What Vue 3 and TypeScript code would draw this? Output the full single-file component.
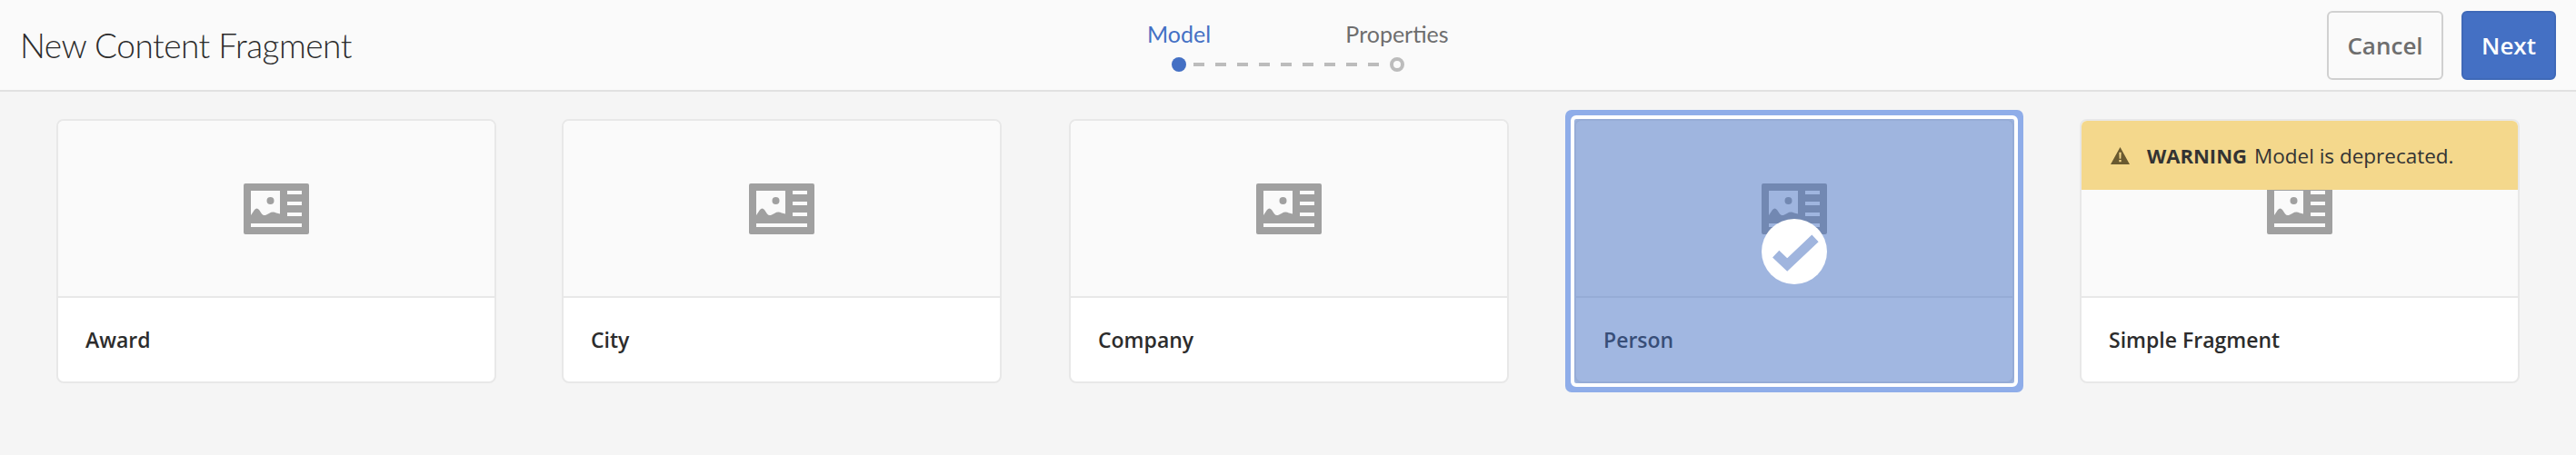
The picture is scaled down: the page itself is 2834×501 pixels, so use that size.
<script setup lang="ts">
interface Model {
  name: string;
  selected?: boolean;
  deprecated?: boolean;
}

const models: Model[] = [
  { name: 'Award' },
  { name: 'City' },
  { name: 'Company' },
  { name: 'Person', selected: true },
  { name: 'Simple Fragment', deprecated: true }
];
</script>

<template>
  <div class="page">
    <header class="bar">
      <h1 class="title">New Content Fragment</h1>
      <div class="steps">
        <div class="labels">
          <span class="step-label active">Model</span>
          <span class="step-label">Properties</span>
        </div>
        <div class="track">
          <span class="dot"></span>
          <span class="dashes"></span>
          <span class="ring"></span>
        </div>
      </div>
      <div class="actions">
        <button class="btn cancel">Cancel</button>
        <button class="btn next">Next</button>
      </div>
    </header>

    <main class="cards">
      <div v-for="m in models" :key="m.name" class="card">
        <div class="thumb">
          <div v-if="m.deprecated" class="warning">
            <svg class="warn-icon" viewBox="0 0 20 18">
              <path fill-rule="evenodd" d="M10 0 L20 18 L0 18 Z M8.9 5.5 L9.2 12 L10.8 12 L11.1 5.5 Z M8.9 13.3 V15.5 H11.1 V13.3 Z" />
            </svg>
            <strong>WARNING</strong>
            <span>Model is deprecated.</span>
          </div>
          <svg class="doc-icon" viewBox="0 0 72 56">
            <path
              fill-rule="evenodd"
              d="M2 0 H70 A2 2 0 0 1 72 2 V54 A2 2 0 0 1 70 56 H2 A2 2 0 0 1 0 54 V2 A2 2 0 0 1 2 0 Z
                 M8 8 V35 L12 29 Q14.500 26 17 29 L20 33.500 Q22 36 25 34.500 L28 33 Q32 30.500 36 32.500 L40 33.500 V8 Z
                 M48 8 V12 H64 V8 Z M48 20 V24 H64 V20 Z M48 32 V36 H64 V32 Z M8 44 V48 H64 V44 Z"
            />
            <circle cx="29.500" cy="19" r="4" />
          </svg>
        </div>
        <div class="name">{{ m.name }}</div>
        <template v-if="m.selected">
          <div class="overlay"></div>
          <div class="check">
            <svg viewBox="-36 -36 72 72"><path d="M-20.300 2.700 L-7.800 14.500 L23 -14.700" /></svg>
          </div>
        </template>
      </div>
    </main>
  </div>
</template>

<style scoped>
.page {
  width: 2834px;
  height: 501px;
  background: #f5f5f5;
  font-family: "Open Sans", "Liberation Sans", sans-serif;
  color: #2c2c2c;
  overflow: hidden;
}

.bar {
  height: 99px;
  background: #fafafa;
  border-bottom: 2px solid #e1e1e1;
  display: grid;
  grid-template-columns: 1fr auto 1fr;
  align-items: center;
  padding: 0 22px;
}

.title {
  margin: 0;
  font-family: Lato, sans-serif;
  font-size: 37px;
  font-weight: 300;
  letter-spacing: -0.5px;
  color: #2c2c2c;
}

.steps {
  display: flex;
  flex-direction: column;
  align-items: center;
  gap: 11px;
  padding-top: 1px;
}

.labels {
  display: grid;
  grid-template-columns: 240px 240px;
  justify-items: center;
  font-family: Lato, sans-serif;
}

.step-label {
  font-size: 25px;
  color: #6e6e6e;
}

.step-label.active {
  color: #4470c4;
}

.track {
  display: flex;
  align-items: center;
  gap: 8px;
}

.dot {
  width: 16px;
  height: 16px;
  border-radius: 50%;
  background: #4470c4;
}

.dashes {
  width: 208px;
  height: 4px;
  background: repeating-linear-gradient(90deg, #bcbcbc 0 12px, transparent 12px 24px);
}

.ring {
  width: 16px;
  height: 16px;
  box-sizing: border-box;
  border: 4px solid #bcbcbc;
  border-radius: 50%;
}

.actions {
  display: flex;
  justify-content: flex-end;
  gap: 20px;
}

.btn {
  height: 76px;
  box-sizing: border-box;
  border-radius: 6px;
  font-family: "Open Sans", sans-serif;
  font-size: 26px;
  font-weight: 600;
}

.cancel {
  width: 128px;
  background: #fafafa;
  border: 2px solid #d0d0d0;
  color: #6e6e6e;
}

.next {
  width: 104px;
  background: #4470c4;
  border: 2px solid #3f69b8;
  color: #fff;
}

.cards {
  display: grid;
  grid-template-columns: 556px 558px 556px 556px 484px;
  padding: 30px 62px 0;
}

.card {
  position: relative;
  width: 484px;
  height: 291px;
  box-sizing: border-box;
  background: #fff;
  border: 2px solid #e8e8e8;
  border-radius: 8px;
  display: flex;
  flex-direction: column;
}

.thumb {
  position: relative;
  height: 193px;
  flex: none;
  background: #fafafa;
  border-bottom: 2px solid #e8e8e8;
  border-radius: 6px 6px 0 0;
  display: flex;
  align-items: center;
  justify-content: center;
  overflow: hidden;
}

.doc-icon {
  width: 72px;
  height: 56px;
  fill: #a0a0a0;
}

.warning {
  position: absolute;
  inset: 0 0 auto 0;
  height: 76px;
  background: #f4d88c;
  display: flex;
  align-items: center;
  padding-left: 32px;
  font-size: 22px;
  color: #333;
  gap: 8px;
}

.warning span {
  font-size: 22.5px;
}

.warn-icon {
  width: 21px;
  height: 19px;
  fill: #6a5a30;
  margin-right: 11px;
}

.name {
  flex: 1;
  display: flex;
  align-items: center;
  padding-left: 30px;
  font-size: 23px;
  font-weight: 600;
  color: #2c2c2c;
}

.overlay {
  position: absolute;
  inset: -2px;
  background: rgba(68, 112, 196, 0.5);
  outline: 4px solid #fff;
  box-shadow: 0 0 0 10px #8fade9;
  border-radius: 2px;
}

.check {
  position: absolute;
  left: 50%;
  top: 108px;
  width: 72px;
  height: 72px;
  margin-left: -36px;
  background: #fff;
  border-radius: 50%;
}

.check svg {
  display: block;
  width: 72px;
  height: 72px;
  fill: none;
  stroke: #a0b5de;
  stroke-width: 10.6;
}
</style>

<style>
body {
  margin: 0;
}
</style>
